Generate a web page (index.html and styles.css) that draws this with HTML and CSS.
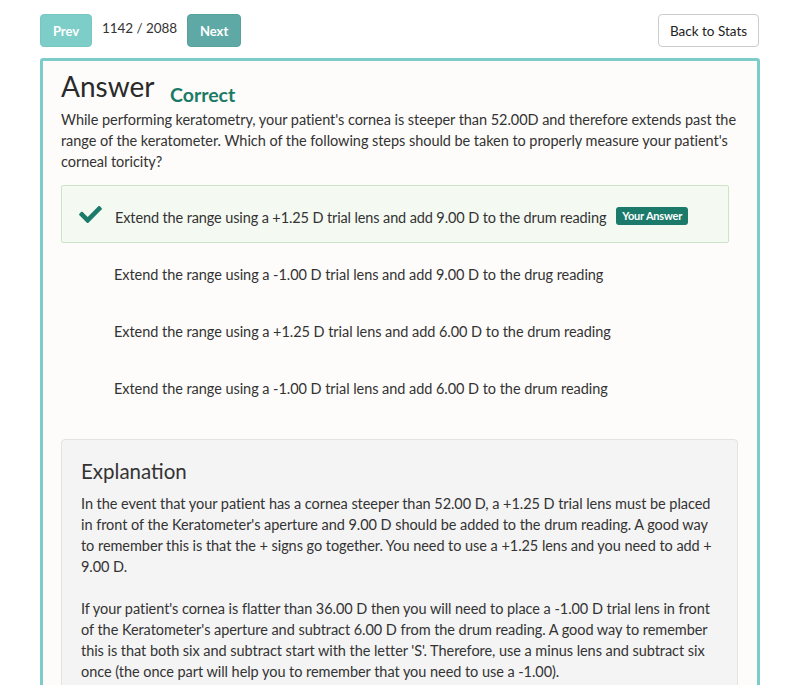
FILE: index.html
```html
<!DOCTYPE html>
<html>
<head>
<meta charset="utf-8">
<link rel="stylesheet" href="styles.css">
</head>
<body>
<div class="page">
  <div class="topbar">
    <div class="nav">
      <button class="btn btn-prev">Prev</button>
      <span class="counter">1142 / 2088</span>
      <button class="btn btn-next">Next</button>
    </div>
    <button class="btn-back">Back to Stats</button>
  </div>
  <div class="card">
    <h1 class="title">Answer <span class="status">Correct</span></h1>
    <p class="question">While performing keratometry, your patient's cornea is steeper than 52.00D and therefore extends past the range of the keratometer. Which of the following steps should be taken to properly measure your patient's corneal toricity?</p>
    <ul class="options">
      <li class="option selected">
        <span class="icon"><svg width="23" height="17" viewBox="0 65 512 382"><path fill="#1b7a69" d="M173.898 439.404l-166.4-166.4c-9.997-9.997-9.997-26.206 0-36.204l36.203-36.204c9.997-9.998 26.207-9.998 36.204 0L192 312.69 432.095 72.596c9.997-9.997 26.207-9.997 36.204 0l36.203 36.204c9.997 9.997 9.997 26.206 0 36.204l-294.4 294.401c-9.998 9.997-26.207 9.997-36.204-.001z"/></svg></span>
        <span class="text">Extend the range using a +1.25 D trial lens and add 9.00 D to the drum reading</span>
        <span class="badge">Your Answer</span>
      </li>
      <li class="option">
        <span class="icon"></span>
        <span class="text">Extend the range using a -1.00 D trial lens and add 9.00 D to the drug reading</span>
      </li>
      <li class="option">
        <span class="icon"></span>
        <span class="text">Extend the range using a +1.25 D trial lens and add 6.00 D to the drum reading</span>
      </li>
      <li class="option">
        <span class="icon"></span>
        <span class="text">Extend the range using a -1.00 D trial lens and add 6.00 D to the drum reading</span>
      </li>
    </ul>
    <div class="explanation">
      <h2 class="exp-title">Explanation</h2>
      <p>In the event that your patient has a cornea steeper than 52.00 D, a +1.25 D trial lens must be placed in front of the Keratometer's aperture and 9.00 D should be added to the drum reading. A good way to remember this is that the + signs go together. You need to use a +1.25 lens and you need to add + 9.00 D.</p>
      <p>If your patient's cornea is flatter than 36.00 D then you will need to place a -1.00 D trial lens in front of the Keratometer's aperture and subtract 6.00 D from the drum reading. A good way to remember this is that both six and subtract start with the letter 'S'. Therefore, use a minus lens and subtract six once (the once part will help you to remember that you need to use a -1.00).</p>
    </div>
  </div>
</div>
</body>
</html>
```

FILE: styles.css
```css
* { box-sizing: border-box; }
html, body { margin: 0; padding: 0; background: #fff; }
body {
  font-family: Lato, "Open Sans", sans-serif;
  color: #333;
  font-size: 14.5px;
  letter-spacing: -0.05px;
  line-height: 21px;
}
.page { padding: 14px 40px 0 40px; }
.topbar {
  display: flex;
  justify-content: space-between;
  align-items: center;
  height: 33px;
  margin-bottom: 11px;
}
.nav { display: flex; align-items: center; }
.btn {
  height: 33px;
  border: 1px solid transparent;
  border-radius: 4px;
  color: #fff;
  font-family: Lato, sans-serif;
  font-weight: bold;
  font-size: 13px;
  padding: 0;
  cursor: pointer;
}
.btn-prev { width: 52px; background: #7dcdc9; border-color: #76c6c2; }
.btn-next { width: 54px; background: #5ea9a5; border-color: #58a29e; }
.counter { font-size: 13.5px; color: #333; margin: 0 10px 0 10px; position: relative; top: -2px; }
.btn-back {
  width: 101px;
  height: 33px;
  background: #fff;
  border: 1px solid #ccc;
  border-radius: 4px;
  font-family: Lato, sans-serif;
  font-size: 13.5px;
  color: #222;
  padding: 0;
  margin-right: 1px;
}
.card {
  border: 3px solid #7ccdca;
  border-radius: 3px;
  background: #fdfcfa;
  padding: 10px 19px 0 18px;
  height: 700px;
}
.title {
  margin: 0 0 -1px 0;
  font-size: 28px;
  line-height: 30px;
  font-weight: normal;
  color: #2a2a2a;
  letter-spacing: 0;
}
.status {
  font-size: 19.5px;
  font-weight: bold;
  color: #1b7a66;
  margin-left: 9px;
  vertical-align: -5px;
}
.question { margin: 0 0 13px 0; }
.options { list-style: none; margin: 0 9px 25px 0; padding: 0; }
.option {
  display: flex;
  align-items: center;
  padding: 17px 20px 17px 17px;
  border: 1px solid transparent;
  border-radius: 2px;
  height: 57px;
  white-space: nowrap;
}
.option.selected {
  background: #f4f9f2;
  border-color: #cde5c7;
  height: 58px;
}
.icon { width: 36px; flex: none; display: flex; align-items: center; padding-top: 1px; }
.option .text { padding-top: 6px; }
.option:not(.selected) .text { margin-left: -1px; }
.option.selected .text { letter-spacing: -0.12px; }
.badge {
  flex: none;
  background: #1b7a69;
  color: #fff;
  font-weight: bold;
  font-size: 11px;
  line-height: 18px;
  padding: 0 6px;
  border-radius: 3px;
  margin-left: 10px;
  margin-top: 3px;
  letter-spacing: -0.2px;
}
.explanation {
  background: #f4f4f4;
  border: 1px solid #e3e3e3;
  border-radius: 4px;
  padding: 18px 20px 20px 19px;
}
.exp-title {
  margin: 0 0 9px 0;
  font-size: 20.5px;
  line-height: 26px;
  font-weight: normal;
  color: #333;
  letter-spacing: 0;
}
.explanation p { margin: 0 0 21px 0; }
```
